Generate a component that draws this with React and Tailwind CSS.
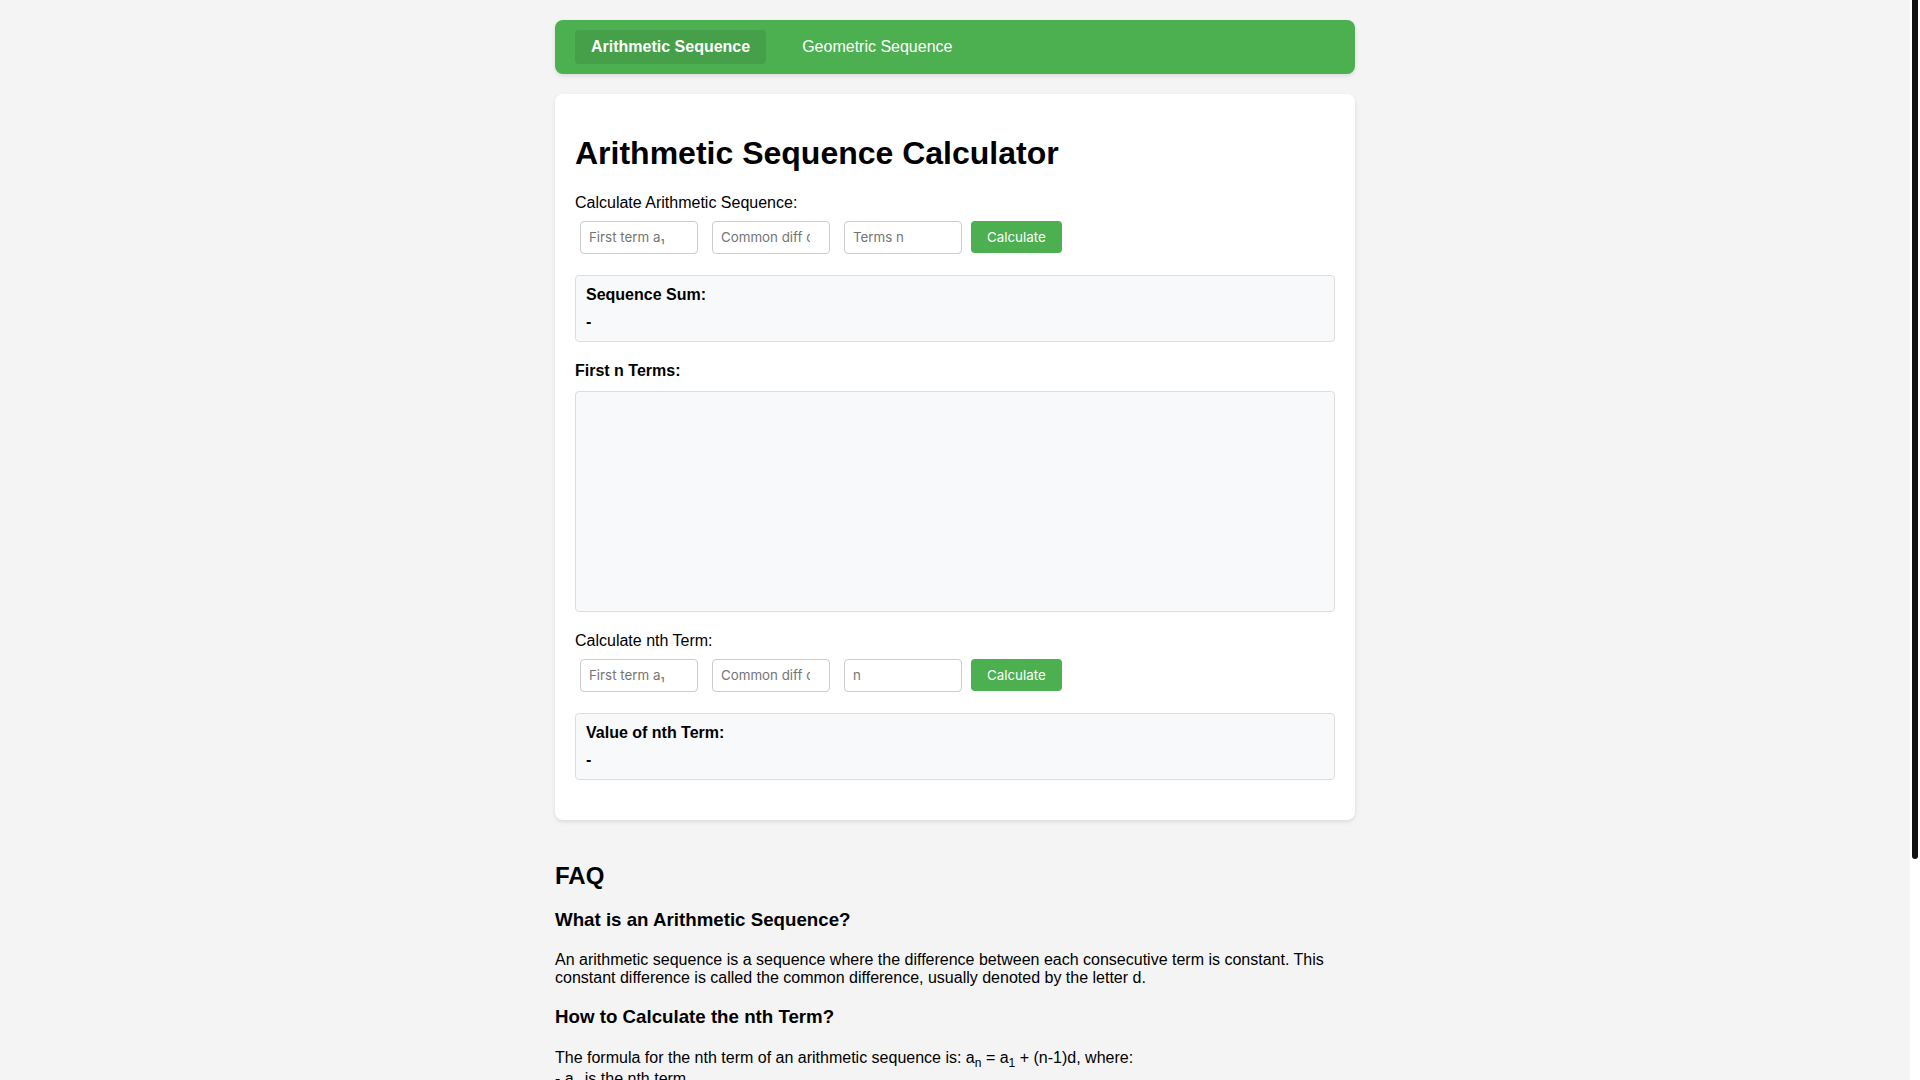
import React from "react";

const inputCls =
  "w-[118px] h-[33px] pl-2 pr-1 border border-[#ccc] rounded bg-white text-[13.33px] text-black placeholder:text-[#757575] font-['Inter',sans-serif] outline-none";

function InputRow({ placeholders }) {
  return (
    <div className="mt-[9px] flex items-center pl-[5px]">
      <input type="number" className={inputCls} placeholder={placeholders[0]} />
      <input type="number" className={inputCls + " ml-[14px]"} placeholder={placeholders[1]} />
      <input type="number" className={inputCls + " ml-[14px]"} placeholder={placeholders[2]} />
      <button className="ml-[9px] h-[32px] px-4 rounded bg-[#4CAF50] text-white text-[13.33px] font-['Inter',sans-serif]">
        Calculate
      </button>
    </div>
  );
}

function ResultBox({ title }) {
  return (
    <div className="mt-[21px] p-[10px] bg-[#f8f9fa] border border-[#ddd] rounded">
      <div className="font-bold">{title}</div>
      <div className="mt-[9px] font-bold">-</div>
    </div>
  );
}

function Sub({ children }) {
  return <sub className="static align-sub text-[12px] leading-[normal]">{children}</sub>;
}

export default function App() {
  return (
    <div className="h-screen overflow-y-auto pr-[10px] bg-[#f4f4f4] text-black text-[16px] leading-[normal] font-['Liberation_Sans',Arial,sans-serif]">
      <div className="max-w-[800px] mx-auto pt-5 pb-[20px]">
        <nav className="flex gap-5 bg-[#4CAF50] rounded-lg px-5 py-[10px] shadow-[0_2px_4px_rgba(0,0,0,0.1)] mb-5">
          <button className="px-4 py-2 rounded bg-[#45a049] text-white font-bold">Arithmetic Sequence</button>
          <button className="px-4 py-2 rounded text-white">Geometric Sequence</button>
        </nav>

        <div className="bg-white rounded-lg shadow-[0_2px_4px_rgba(0,0,0,0.1)] px-5 pt-5 pb-[40px]">
          <h1 className="mt-[21.44px] mb-[21.44px] text-[32px] font-bold">Arithmetic Sequence Calculator</h1>

          <div>Calculate Arithmetic Sequence:</div>
          <InputRow placeholders={["First term a₁", "Common diff d", "Terms n"]} />
          <ResultBox title="Sequence Sum:" />

          <div className="mt-[20px] font-bold">First n Terms:</div>
          <div className="mt-[11px] h-[221px] bg-[#f8f9fa] border border-[#ddd] rounded" />

          <div className="mt-[20px]">Calculate nth Term:</div>
          <InputRow placeholders={["First term a₁", "Common diff d", "n"]} />
          <ResultBox title="Value of nth Term:" />
        </div>

        <section>
          <h2 className="mt-[42px] text-[24px] font-bold">FAQ</h2>

          <h3 className="mt-[19px] text-[18.72px] font-bold">What is an Arithmetic Sequence?</h3>
          <p className="mt-[20px]">
            An arithmetic sequence is a sequence where the difference between each consecutive term is constant. This
            constant difference is called the common difference, usually denoted by the letter d.
          </p>

          <h3 className="mt-[18.72px] text-[18.72px] font-bold">How to Calculate the nth Term?</h3>
          <p className="mt-[21px]">
            The formula for the nth term of an arithmetic sequence is: a<Sub>n</Sub> = a<Sub>1</Sub> + (n-1)d, where:
            <br />- a<Sub>n</Sub> is the nth term
            <br />- a<Sub>1</Sub> is the first term
            <br />- d is the common difference
            <br />- n is the term number
          </p>

          <h3 className="mt-[18.72px] text-[18.72px] font-bold">How to Calculate the Sum of an Arithmetic Sequence?</h3>
          <p className="mt-[18.72px]">
            The sum of the first n terms of an arithmetic sequence is: S<Sub>n</Sub> = n/2 × (2a<Sub>1</Sub> + (n-1)d),
            or equivalently S<Sub>n</Sub> = n/2 × (a<Sub>1</Sub> + a<Sub>n</Sub>).
          </p>

          <h3 className="mt-[18.72px] text-[18.72px] font-bold">What is the difference between arithmetic and geometric sequences?</h3>
          <p className="mt-[18.72px]">
            In an arithmetic sequence each term is obtained by adding a constant to the previous term, while in a
            geometric sequence each term is obtained by multiplying the previous term by a constant ratio.
          </p>
        </section>
      </div>

      {/* scrollbar as seen in the screenshot */}
      <div className="fixed top-0 right-0 h-screen w-[10px] bg-white">
        <div className="mx-[2px] w-[6px] h-[859px] bg-[#111] rounded-b-[3px]" />
      </div>
    </div>
  );
}
